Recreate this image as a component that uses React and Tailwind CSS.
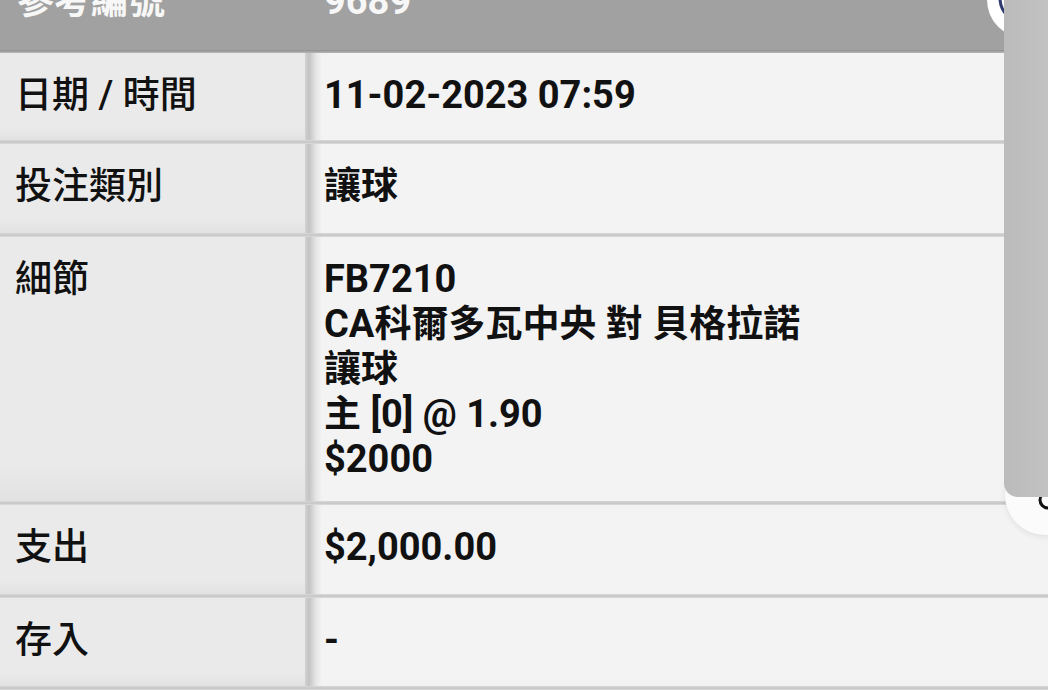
import React from "react";

const FONT = { fontFamily: "Roboto, 'Noto Sans CJK TC', 'Noto Sans', sans-serif" };

function T({ text }) {
  const parts = text.split(/([\u3400-\u9fff]+)/);
  return (
    <>
      {parts.map((p, i) =>
        /[\u3400-\u9fff]/.test(p) ? (
          <span key={i} className="text-[37px]">
            {p}
          </span>
        ) : (
          <React.Fragment key={i}>{p}</React.Fragment>
        )
      )}
    </>
  );
}

function Sep() {
  return <div className="h-[4px] w-full bg-[linear-gradient(to_bottom,#d9d9d9,#c5c5c5_55%,#dedede)]" />;
}

function Row({ label, lines, h }) {
  return (
    <div className="flex flex-col">
      <div className={`flex ${h}`}>
        <div className="w-[305px] shrink-0 bg-[linear-gradient(to_bottom,#eaeaea_85%,#e2e2e2)] pl-[15px] pt-[20px] text-[38px] leading-[45px] font-medium text-[#111]">
          <T text={label} />
        </div>
        <div className="flex-1 bg-[linear-gradient(to_right,#d2d2d2_0px,#c3c3c3_4px,#e6e6e6_11px,#f3f3f3_17px)] pl-[19px] pt-[20px] text-[38px] leading-[45px] font-bold text-[#111]">
          {lines.map((l, i) => (
            <div key={i}>
              <T text={l} />
            </div>
          ))}
        </div>
      </div>
      <Sep />
    </div>
  );
}

export default function App() {
  return (
    <div className="relative w-[1048px] h-[690px] overflow-hidden bg-[#f3f3f3]" style={FONT}>
      <div className="flex flex-col">
        <div className="h-[50px] bg-[#a1a1a1] overflow-hidden">
          <div className="flex -mt-[21px] text-[38px] leading-[45px] font-bold text-[#f7f7f7]">
            <div className="w-[305px] pl-[17px]">
              <T text="參考編號" />
            </div>
            <div className="pl-[19px]">9689</div>
          </div>
        </div>
        <div className="h-[3px] bg-[linear-gradient(to_bottom,#8e8e8e,#b8b8b8)]" />
        <Row label="日期 / 時間" lines={["11-02-2023 07:59"]} h="h-[87px]" />
        <Row label="投注類別" lines={["讓球"]} h="h-[89px]" />
        <Row
          label="細節"
          lines={["FB7210", "CA科爾多瓦中央 對 貝格拉諾", "讓球", "主 [0] @ 1.90", "$2000"]}
          h="h-[264px]"
        />
        <Row label="支出" lines={["$2,000.00"]} h="h-[89px]" />
        <Row label="存入" lines={["-"]} h="h-[88px]" />
      </div>

      {/* top floating circle */}
      <div className="absolute left-[987px] top-[-38px] w-[76px] h-[76px] rounded-full bg-white">
        <svg className="absolute left-0 top-0" width="76" height="76" viewBox="0 0 76 76">
          <circle cx="38" cy="36" r="25" fill="none" stroke="#2e3a70" strokeWidth="3" />
        </svg>
      </div>

      {/* bottom floating circle */}
      <div className="absolute left-[1005px] top-[455px] w-[80px] h-[80px] rounded-full bg-[#fbfbfb] shadow-[0_2px_6px_rgba(0,0,0,0.08)]">
        <svg className="absolute left-0 top-0" width="80" height="80" viewBox="0 0 80 80">
          <circle cx="43" cy="45" r="8" fill="none" stroke="#111" strokeWidth="3" />
        </svg>
      </div>

      {/* right gray panel */}
      <div className="absolute left-[1004px] top-0 w-[44px] h-[497px] rounded-bl-[14px] bg-[linear-gradient(to_right,#bbbbbb,#c2c2c2)]" />
    </div>
  );
}
